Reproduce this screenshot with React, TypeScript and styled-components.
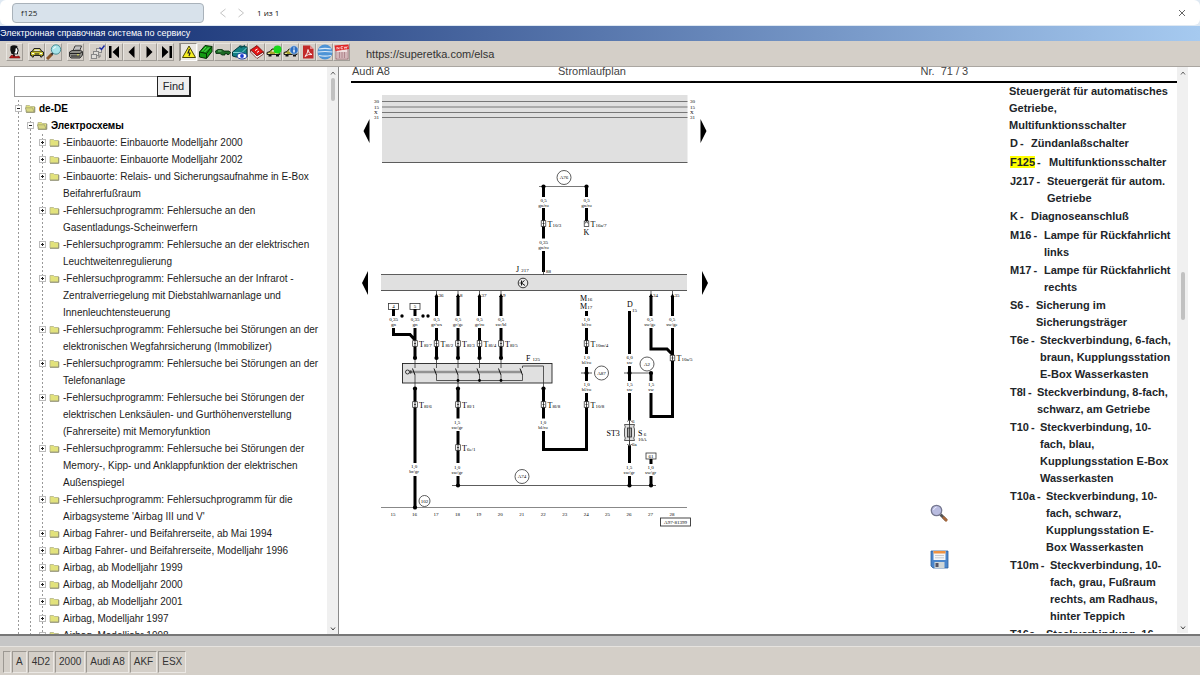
import React from 'react';
import styled, { createGlobalStyle } from 'styled-components';

const GlobalStyle = createGlobalStyle`
  *, *::before, *::after { box-sizing: border-box; }
  html, body { margin: 0; padding: 0; }
  body {
    font-family: "Liberation Sans", Arial, sans-serif;
    font-size: 11px;
    color: #212529;
    background: #d4cfc8;
  }
  ul, dl, dd, p { margin: 0; padding: 0; }
  ul { list-style: none; }
  button { padding: 0; font: inherit; color: inherit; cursor: pointer; }
  svg { display: block; }
`;

const Page = styled.div`
  display: flex;
  flex-direction: column;
  height: 100vh;
  overflow: hidden;
`;

/* ---------- browser find bar ---------- */

const FindBarFrame = styled.div`
  flex: none;
  background: #dfe9f3;
  padding-bottom: 1px;
`;

const FindBar = styled.form`
  display: flex;
  align-items: center;
  height: 25px;
  padding: 0 9px 0 12px;
  border-radius: 6px;
  background: #fff;
  font-family: "Open Sans", "Noto Sans", sans-serif;
  font-size: 8px;
`;

const FindBarInput = styled.input`
  width: 192px;
  height: 20px;
  margin-right: 10px;
  padding: 0 8px;
  border: 1px solid #a9b2ba;
  border-radius: 4px;
  background: #d8e2eb;
  color: #222;
  font: inherit;
  outline: none;
`;

const GhostButton = styled.button`
  display: grid;
  place-items: center;
  width: 18px;
  height: 18px;
  border: 0;
  background: none;
`;

const FindCount = styled.output`
  flex: 1;
  margin-left: 7px;
  color: #111;
`;

/* ---------- title and tool bars ---------- */

const TitleBar = styled.div`
  flex: none;
  height: 15px;
  line-height: 14px;
  font-size: 9px;
  color: #fff;
  background: linear-gradient(to right, #0a246a, #a6caf0);
`;

const Toolbar = styled.div`
  flex: none;
  display: flex;
  align-items: center;
  gap: 5px;
  height: 26px;
  padding: 0 6px 4px;
  background: #d4cfc8;
  border-bottom: 1px solid #aaa6a1;
`;

const ToolGroup = styled.div<{ $divided?: boolean }>`
  display: flex;
  border-left: ${p => (p.$divided ? '1px solid #99958f' : '0')};
`;

const ToolButton = styled.button<{ $pressed?: boolean }>`
  display: grid;
  place-items: center;
  width: 17px;
  height: 18px;
  border: 1px solid;
  border-color: ${p => (p.$pressed ? '#8e8a85 #fff #fff #8e8a85' : '#e8e5e0 #a19d97 #a19d97 #e8e5e0')};
  background: ${p => (p.$pressed ? '#ebe8e3' : '#d4cfc8')};
`;

const SiteAddress = styled.span`
  margin-left: 11px;
  padding-top: 5px;
  color: #333;
`;

/* ---------- main area ---------- */

const Main = styled.main`
  flex: 1;
  min-height: 0;
  display: flex;
  background: #fff;
  border-bottom: 2px solid #777;
`;

const Sidebar = styled.aside`
  flex: none;
  display: flex;
  width: 339px;
  border-right: 1px solid #8a8a8a;
`;

const SidebarContent = styled.div`
  flex: 1;
  min-width: 0;
  overflow: hidden;
  padding-top: 9px;
`;

const SearchForm = styled.form`
  display: flex;
  height: 21px;
  margin: 0 0 3px 14px;
`;

const SearchInput = styled.input`
  width: 143px;
  border: 1px solid #999;
  border-right: 0;
  padding: 0 4px;
  font: inherit;
  outline: none;
`;

const SearchButton = styled.button`
  width: 34px;
  border: 1px solid #222;
  border-width: 1px 2px 2px 1px;
  background: #efefef;
`;

const TreeList = styled.ul<{ $root?: boolean }>`
  padding-left: ${p => (p.$root ? '15px' : '12px')};
  background: repeating-linear-gradient(to bottom, #999 0 2px, transparent 2px 4px)
    ${p => (p.$root ? '18px' : '15px')} 0 / 1px 100% no-repeat;
`;

const TreeRow = styled.div<{ $bold?: boolean }>`
  display: grid;
  grid-template-columns: 7px 11px 1fr;
  column-gap: 3px;
  font-size: 10px;
  line-height: 17px;
  font-weight: ${p => (p.$bold ? 'bold' : 'normal')};
  color: ${p => (p.$bold ? '#000' : '#1c1c1c')};
`;

const TreeLabel = styled.span`
  white-space: pre;
`;

const Toggle = styled.button`
  width: 7px;
  height: 17px;
  border: 0;
  background: none;
`;

const FolderSlot = styled.span`
  display: flex;
  align-items: center;
  height: 17px;
`;

/* ---------- scrollbar ---------- */

const ScrollTrack = styled.div`
  flex: none;
  display: flex;
  flex-direction: column;
  align-items: center;
  width: 11px;
  background: #f0f0f0;
`;

const ScrollSpace = styled.div<{ $grow: number }>`
  flex: ${p => p.$grow} 1 0;
`;

const ScrollThumb = styled.div<{ $size: number }>`
  flex: none;
  width: 4px;
  height: ${p => p.$size}px;
  border-radius: 2px;
  background: #c1c1c1;
`;

const ScrollArrow = styled.div`
  display: grid;
  place-items: center;
  height: 11px;
`;

/* ---------- document ---------- */

const Document = styled.section`
  flex: 1;
  min-width: 0;
  display: flex;
  padding: 0 12px 1px 12px;
`;

const Sheet = styled.article`
  flex: 1;
  min-width: 0;
  display: flex;
  flex-direction: column;
  overflow: hidden;
`;

const SheetHeader = styled.header`
  flex: none;
  display: grid;
  grid-template-columns: 25fr 44fr 31fr;
  height: 16px;
  padding: 0 1px;
  line-height: 9px;
  border-bottom: 2px solid #000;
  color: #444;
`;

const SheetBody = styled.div`
  flex: 1;
  min-height: 0;
  display: flex;
`;

const DiagramPane = styled.div`
  flex: 1;
  min-width: 0;
  padding: 7px 9px;
`;

const SheetTools = styled.div`
  flex: none;
  display: flex;
  flex-direction: column;
  justify-content: flex-end;
  gap: 27px;
  width: 79px;
  padding-bottom: 64px;
`;

const SheetTool = styled.button`
  width: 19px;
  height: 19px;
  border: 0;
  background: none;
`;

const Legend = styled.div`
  flex: none;
  width: 168px;
  overflow: hidden;
  font-weight: bold;
  line-height: 17px;
  white-space: pre;
`;

const LegendTitle = styled.p`
  padding-bottom: 1px;
`;

const LegendItem = styled.dl<{ $indent: number; $wrapped: boolean }>`
  display: grid;
  grid-template-columns: ${p => p.$indent}px 1fr;
  padding: 0 0 ${p => (p.$wrapped ? 1 : 2)}px 1px;
`;

const LegendTerm = styled.dt`
  display: flex;
  gap: 2px;
`;

const Hit = styled.mark`
  background: #ff0;
  color: inherit;
  height: 12px;
  line-height: 12px;
  margin-top: 2px;
`;

/* ---------- status bar ---------- */

const StatusBand = styled.div`
  flex: none;
  height: 11px;
  background: #c6c6c6;
  border-bottom: 1px solid #e6e3df;
`;

const StatusBar = styled.footer`
  flex: none;
  display: flex;
  gap: 1px;
  height: 28px;
  padding: 4px 3px 2px;
  background: #d4cfc8;
`;

const StatusCell = styled.span`
  min-width: 7px;
  padding: 0 3px;
  border: 1px solid;
  border-color: #9c9892 #ebe8e4 #ebe8e4 #9c9892;
  font-size: 10px;
  line-height: 20px;
  color: #333;
`;

/* ---------- icons ---------- */

const Svg16: React.FC<{ children: React.ReactNode }> = ({ children }) => (
  <svg width="16" height="16" viewBox="0 0 16 16" aria-hidden="true">{children}</svg>
);

const CarShape = () => (
  <>
    <path d="M1.500 8 L3.500 7 L5 4.500 H11 L12.500 7 L14.500 8 V11.500 H13 V13 H11.500 V11.500 H4.500 V13 H3 V11.500 H1.500 Z" fill="#c8c032" stroke="#222" strokeWidth="1" />
    <path d="M5 7 L5.800 5.500 H10.200 L11 7 Z" fill="#e4e4d8" />
    <path d="M3 7.500 H13" stroke="#4a4720" strokeWidth="0.700" />
    <path d="M3 9.500 H5 M11 9.500 H13" stroke="#fff" />
    <path d="M6 10 H10" stroke="#222" />
  </>
);

const CarSideShape = () => (
  <>
    <path d="M1 8.500 L4 7.500 L6 5 H12 L13.500 7.500 L14 10.500 H1 Z" fill="#a9a22e" stroke="#222" />
    <path d="M5.500 7.500 L6.800 6 H8.500 V7.500 Z" fill="#fff" />
    <path d="M2 9.500 H4 M9 9.500 H12" stroke="#e8e49a" />
    <rect x="2.500" y="10.500" width="3" height="2" fill="#111" />
    <rect x="10" y="10.500" width="3" height="2" fill="#111" />
  </>
);

const icons: Record<string, React.ReactNode> = {
  user: (
    <>
      <path d="M5 2 H11 V9 L9 12 H6 L4 9 Z" fill="#fff" />
      <path d="M3.500 2.500 Q6 0.500 10.500 2 L10.500 4 L8.500 4.500 L8.500 7 L6.500 10.500 L4.500 10 Q2.500 6 3.500 2.500 Z" fill="#111" />
      <path d="M10.500 4 L11.200 7 L10.500 8 V10 H8" stroke="#111" fill="none" />
      <path d="M2.500 14 L4 11.500 L7 11 L9 12.500 L12 12 L13 14 Z" fill="#c01818" stroke="#500" strokeWidth="0.500" />
      <path d="M7 9 V12.500" stroke="#111" strokeWidth="1.500" />
    </>
  ),
  car: <CarShape />,
  search: (
    <>
      <path d="M6 10 L1 15" stroke="#8a5527" strokeWidth="3" />
      <path d="M7.500 8.500 L5.500 10.500" stroke="#333" strokeWidth="2" />
      <circle cx="10" cy="5.500" r="4.700" fill="#a8e4ea" stroke="#4a8f96" />
      <path d="M7.500 5 Q8 3 10 2.800" stroke="#fff" fill="none" />
    </>
  ),
  print: (
    <>
      <path d="M5 7 L7 2 H13.500 L11.500 7 Z" fill="#fff" stroke="#333" />
      <path d="M7 4 H12 M6.500 5.700 H11.500" stroke="#555" strokeWidth="0.700" />
      <path d="M1.500 8 L4 6.500 H12.500 L14.500 7.500 V11 L12 14 H3 L1.500 12.500 Z" fill="#8d8d88" stroke="#333" />
      <path d="M2 9.500 H12 L14 7.800 M3 12 H12" stroke="#222" fill="none" />
      <path d="M9 10.800 H11" stroke="#e6e64a" />
    </>
  ),
  steps: (
    <>
      <rect x="6.500" y="4.500" width="5" height="4" fill="#e0deda" stroke="#888" />
      <rect x="3.500" y="7.500" width="5" height="4" fill="#e0deda" stroke="#888" />
      <rect x="1.500" y="10.500" width="5" height="4" fill="#e0deda" stroke="#888" />
      <path d="M8 13 H10 V10.500" fill="none" stroke="#777" />
      <path d="M9.500 3.500 L11.500 5.500 L14.500 1.500" fill="none" stroke="#1b2ca8" strokeWidth="1.400" />
    </>
  ),
  first: <path d="M2 2 H4.500 V14 H2 Z M12 2 V14 L5.500 8 Z" fill="#000" />,
  prev: <path d="M10.500 2 V14 L4.500 8 Z" fill="#000" />,
  next: <path d="M5.500 2 V14 L11.500 8 Z" fill="#000" />,
  last: <path d="M11.500 2 H14 V14 H11.500 Z M4 2 V14 L10.500 8 Z" fill="#000" />,
  voltage: (
    <>
      <path d="M8 2 L14.500 13.500 H1.500 Z" fill="#f6ee22" stroke="#4a4600" />
      <path d="M8.500 5 L7 9 H9 L8 12" fill="none" stroke="#222" strokeWidth="1.200" />
    </>
  ),
  box: (
    <>
      <path d="M1.500 8 L7 1.500 L14 2.500 V7.500 L8.500 14.500 L1.500 13 Z" fill="#149a14" stroke="#042c04" />
      <path d="M1.500 8 L8.500 9.500 L14 2.500 M8.500 9.500 V14" fill="none" stroke="#042c04" />
      <path d="M4 7.500 L8 3 M6.500 8 L11 3.500" stroke="#5fe05f" />
    </>
  ),
  connector: (
    <>
      <path d="M0.500 7 L3 5.500 H7 L9 7 L14 7 L15.500 8.500 L14 10.500 H12 V9.500 H10 V11 H7 L5 9.500 H1 Z" fill="#1d6a26" stroke="#04270a" strokeWidth="0.800" />
      <path d="M3 7 H6.500" stroke="#7fc784" />
    </>
  ),
  manual: (
    <>
      <path d="M0.500 8 L8 2 L15 3 V13 H4 L0.500 12 Z" fill="#128083" stroke="#04383a" />
      <path d="M1 8.500 L10 8.500 L15 3.500" stroke="#7fd0d2" fill="none" />
      <path d="M8 1.500 L9 4 L13 1" stroke="#0a5557" fill="none" />
      <ellipse cx="10" cy="12" rx="5" ry="3" fill="#fff" stroke="#1c3aa0" />
      <circle cx="10" cy="12" r="1.900" fill="#1c3ad0" />
    </>
  ),
  book: (
    <>
      <path d="M1.500 6 L8 1.500 L14.500 8 L8 12 Z" fill="#e31616" stroke="#5a0000" strokeWidth="0.700" />
      <path d="M1.500 6 V8 L8 14.500 L14.500 10 V8 L8 12 Z" fill="#fff" stroke="#5a0000" strokeWidth="0.700" />
      <path d="M6 6.500 L8.500 5 M8 8.500 L10 7" stroke="#fff" />
    </>
  ),
  carOk: (
    <>
      <CarSideShape />
      <circle cx="11.500" cy="5.500" r="4" fill="#18d61c" />
    </>
  ),
  carInfo: (
    <>
      <CarSideShape />
      <circle cx="11" cy="6" r="4.200" fill="#2e6fc2" stroke="#cfe0f4" strokeWidth="0.700" />
      <path d="M11 3.400 V4.600 M11 5.500 V8.600" stroke="#fff" strokeWidth="1.500" />
    </>
  ),
  pdf: (
    <>
      <path d="M3 1.500 H10 L13.500 5 V14.500 H3 Z" fill="#c22a2a" />
      <path d="M10 1.500 V5 H13.500" fill="#e58a8a" />
      <path d="M5 12.500 Q8 9 8 5.500 Q8.500 10 12 10.500 Q8 9.800 5 12.500" fill="none" stroke="#fff" strokeWidth="0.900" />
    </>
  ),
  globe: (
    <>
      <circle cx="8" cy="8" r="7.500" fill="#4d94d6" />
      <path d="M2 5 Q8 3.600 14 5 M0.500 8 Q8 7 15.500 8 M2 11.500 Q8 12.700 14 11.500" stroke="#dcebf8" fill="none" strokeWidth="1.200" />
    </>
  ),
  calendar: (
    <>
      <rect x="2" y="4" width="12" height="11" fill="#efe0e0" stroke="#8e5560" strokeWidth="0.800" />
      <path d="M3 9 H13 M3 11 H13 M3 13 H13 M5.500 8 V14 M8 8 V14 M10.500 8 V14" stroke="#a87a82" strokeWidth="0.800" />
      <path d="M0.500 1.500 L14.500 0.500 L15 5 L1.500 7 Z" fill="#e02626" />
      <path d="M3 5.500 V3.200 L5 5.200 V3 M9 4.800 H7 V2.700 H9 M10 2.500 L10.800 4.500 L11.600 2.800 L12.400 4.300 L13.200 2.200" stroke="#fff" strokeWidth="0.700" fill="none" />
    </>
  ),
};

const Folder: React.FC<{ open?: boolean }> = ({ open }) => (
  <svg width="11" height="9" viewBox="0 0 11 9" aria-hidden="true">
    <path d="M1 8 V1.500 H4.500 L5.500 2.500 H9.500 V8 Z" fill="#e2e27c" stroke="#b4b48a" strokeWidth="0.800" />
    <path d="M1 8.300 H9.800 V3" fill="none" stroke="#808062" strokeWidth="0.800" />
    {open && <path d="M0.300 3.800 H7.500 L9 8 H2 Z" fill="#d8d884" stroke="#9a9a70" strokeWidth="0.700" />}
  </svg>
);

const PlusMinus: React.FC<{ open?: boolean }> = ({ open }) => (
  <svg width="7" height="7" viewBox="0 0 7 7" aria-hidden="true">
    <rect x="0.500" y="0.500" width="6" height="6" fill="#fff" stroke="#bbb" />
    <path d={open ? 'M2 3.500 H5' : 'M2 3.500 H5 M3.500 2 V5'} stroke="#222" />
  </svg>
);

const Chevron: React.FC<{ d: string; color: string; w?: number; h?: number; stroke?: number }> = ({ d, color, w = 8, h = 10, stroke = 1 }) => (
  <svg width={w} height={h} viewBox={`0 0 ${w} ${h}`} aria-hidden="true">
    <path d={d} fill="none" stroke={color} strokeWidth={stroke} />
  </svg>
);

const Scrollbar: React.FC<{ before: number; size: number; after: number }> = ({ before, size, after }) => (
  <ScrollTrack aria-hidden="true">
    <ScrollArrow><Chevron w={6} h={4} d="M1 3.500 L3 1 L5 3.500" color="#666" stroke={1} /></ScrollArrow>
    <ScrollSpace $grow={before} />
    <ScrollThumb $size={size} />
    <ScrollSpace $grow={after} />
    <ScrollArrow><Chevron w={6} h={4} d="M1 0.500 L3 3 L5 0.500" color="#444" stroke={1} /></ScrollArrow>
  </ScrollTrack>
);

/* ---------- wiring diagram ---------- */

const DiagramSvg = styled.svg`
  font-family: "Liberation Serif", "Times New Roman", serif;
  font-size: 5px;
  fill: #000;
`;

const Wire: React.FC<{ d: string }> = ({ d }) => <path d={d} fill="none" stroke="#000" strokeWidth="3" />;
const Line: React.FC<{ d: string; c?: string }> = ({ d, c = '#333' }) => <path d={d} fill="none" stroke={c} strokeWidth="0.800" />;
const Dot: React.FC<{ x: number; y: number }> = ({ x, y }) => <circle cx={x} cy={y} r="2.100" fill="#000" />;

const Gauge: React.FC<{ x: number; y: number; size: string; color: string }> = ({ x, y, size, color }) => (
  <g textAnchor="middle">
    <text x={x} y={y + 2}>{size}</text>
    <text x={x} y={y + 7}>{color}</text>
  </g>
);

const Plug: React.FC<{ x: number; y: number; name: string; pin: string }> = ({ x, y, name, pin }) => (
  <g>
    <rect x={x - 2.3} y={y - 2.8} width="4.600" height="5.600" fill="#fff" stroke="#222" strokeWidth="0.700" />
    <path d={`M${x} ${y - 2.5} V${y + 2.5} M${x - 1} ${y} H${x + 1}`} stroke="#222" strokeWidth="0.800" />
    <text x={x + 4} y={y + 3} fontSize="8">{name}<tspan fontSize="5">{pin}</tspan></text>
  </g>
);

const Ring: React.FC<{ x: number; y: number; r?: number; label: string }> = ({ x, y, r = 7, label }) => (
  <g>
    <circle cx={x} cy={y} r={r} fill="#fff" stroke="#333" strokeWidth="0.800" />
    <text x={x} y={y + 1.7} textAnchor="middle">{label}</text>
  </g>
);

const BoxTag: React.FC<{ x: number; y: number; label: string; w?: number }> = ({ x, y, label, w = 10 }) => (
  <g>
    <rect x={x - w / 2} y={y - 3} width={w} height="6" fill="#fff" stroke="#333" strokeWidth="0.800" />
    <text x={x} y={y + 1.8} textAnchor="middle">{label}</text>
  </g>
);

const Terminal: React.FC<{ x: number; label: string }> = ({ x, label }) => (
  <g>
    <Line d={`M${x} 291 V297`} />
    <path d={`M${x - 2} 297 L${x} 293.500 L${x + 2} 297 Z`} />
    <text x={x + 2} y="297">{label}</text>
    <Wire d={`M${x} 296 V316`} />
  </g>
);

const controlPins = [
  { x: 436.5, pin: '36', color: 'gr/ws', plug: '8l/2' },
  { x: 458, pin: '8', color: 'gr/ge', plug: '8l/3' },
  { x: 479.5, pin: '37', color: 'gr/ro', plug: '8l/4' },
  { x: 501, pin: '9', color: 'sw/bl', plug: '8l/5' },
];

const railLabels = [
  { y: 101.5, label: '30' },
  { y: 107, label: '15' },
  { y: 112.5, label: 'X' },
  { y: 117.5, label: '31' },
];

const switchXs = [415, 436.5, 458, 479.5, 501, 522.5];

const Diagram = () => (
  <DiagramSvg width="352" height="440" viewBox="360 90 352 440" role="img" aria-label="Stromlaufplan">
    <rect x="382" y="95" width="305.500" height="67" fill="#e0e0e0" />
    {railLabels.map(r => (
      <g key={r.label}>
        <path d={`M382 ${r.y} H687.500`} stroke="#777" strokeWidth="1" />
        <text x="374" y={r.y + 1.5}>{r.label}</text>
        <text x="690" y={r.y + 1.5}>{r.label}</text>
      </g>
    ))}
    <Line d="M382 162.500 H687.500" />
    <path d="M363.500 131 L369.500 119 V143 Z M706.500 131 L700.500 119 V143 Z M362 283 L368 271 V295 Z M708 283 L702 271 V295 Z" fill="#000" />

    {/* diagnosis line A76 */}
    <Ring x={564} y={177.5} label="A76" />
    <Line d="M539 186.500 H587" c="#555" />
    <Wire d="M543.500 186 V197 M586.500 186 V197 M543.500 208 V238.500 M586.500 208 V222 M543.500 251 V272" />
    <Dot x={543.5} y={186.5} />
    <Dot x={586.5} y={186.5} />
    <Gauge x={543.5} y={199.5} size="0,5" color="gn/ro" />
    <Gauge x={586.5} y={199.5} size="0,5" color="gn/ro" />
    <Gauge x={543.5} y={242} size="0,35" color="gn/ro" />
    <Plug x={543.5} y={223.5} name="T" pin="10/3" />
    <rect x="584.200" y="221" width="4.600" height="5.500" fill="#fff" stroke="#222" strokeWidth="0.700" />
    <path d="M585 223.500 L586.500 221.500 L588 223.500" fill="none" stroke="#222" strokeWidth="0.800" />
    <text x="590.500" y="226.500" fontSize="8">T<tspan fontSize="5">16a/7</tspan></text>
    <text x="586.500" y="235" fontSize="8" textAnchor="middle">K</text>
    <text x="516" y="272" fontSize="8">J <tspan fontSize="5">217</tspan></text>
    <text x="546" y="273">88</text>

    {/* control unit J217 */}
    <rect x="381" y="275" width="306" height="16" fill="#e0e0e0" />
    <Line d="M381 274.500 H687 M381 290.500 H687 M543.500 270 V275" />
    <circle cx="523" cy="283" r="4.800" fill="#e8e8e8" stroke="#222" strokeWidth="0.900" />
    <path d="M521.500 280.500 V285.500 M524.500 280.500 L521.500 283 L525 285.500" fill="none" stroke="#111" />
    <path d="M519.500 283 H522" stroke="#111" strokeWidth="0.700" />

    <BoxTag x={393.5} y={306.5} label="4" />
    <BoxTag x={415} y={306.5} label="5" />
    <Wire d="M393.500 309 V316 M415 309 V316 M393.500 328 V334.500 H410 L415 340 M415 328 V358" />
    <Gauge x={393.5} y={319} size="0,35" color="gn" />
    <Gauge x={415} y={319} size="0,35" color="gn" />
    <circle cx="402" cy="316" r="1.700" />
    <circle cx="423" cy="316" r="1.700" />
    <circle cx="428" cy="316" r="1.700" />
    <Plug x={415} y={343.5} name="T" pin="8l/7" />
    {controlPins.map(p => (
      <g key={p.pin}>
        <Terminal x={p.x} label={p.pin} />
        <Gauge x={p.x} y={319} size="0,5" color={p.color} />
        <Wire d={`M${p.x} 328 V358`} />
        <Plug x={p.x} y={343.5} name="T" pin={p.plug} />
      </g>
    ))}

    {/* multifunction switch F125 */}
    <rect x="402.500" y="363.500" width="149.500" height="19.500" fill="#e0e0e0" stroke="#222" strokeWidth="0.900" />
    <text x="526" y="360.500" fontSize="8">F <tspan fontSize="5">125</tspan></text>
    <circle cx="407.500" cy="372" r="2" fill="none" stroke="#111" strokeWidth="0.800" />
    <circle cx="410.500" cy="372" r="1.400" />
    <Line d="M409 371.300 H522" c="#666" />
    <Line d="M409 372.700 H522" c="#666" />
    {switchXs.map(x => (
      <g key={x}>
        <Line d={`M${x} ${x === 522.5 ? 366 : 358} V368 M${x} 375 V${x === 415 ? 388 : 380.5}`} />
        <path d={`M${x - 2.5} 368.500 L${x} 375`} stroke="#000" strokeWidth="0.900" />
        {x < 522 && <Dot x={x} y={358} />}
      </g>
    ))}
    <Line d="M436.500 380.500 H522.500 M458 380.500 V388 M522.500 366 H543.500 V388" />
    {[458, 479.5, 501].map(x => <circle key={x} cx={x} cy="380.500" r="1.400" />)}
    {[415, 458, 543.5].map(x => <Dot key={x} x={x} y={388.5} />)}

    <Wire d="M415 388 V463 M415 476 V508 M458 388 V418.500 M458 431 V463 M458 476 V485.500" />
    <Plug x={415} y={404.5} name="T" pin="8l/6" />
    <Plug x={458} y={404.5} name="T" pin="8l/1" />
    <Plug x={458} y={447.5} name="T" pin="6e/1" />
    <Gauge x={414} y={466} size="1,0" color="br/gr" />
    <Gauge x={457} y={421.5} size="1,5" color="sw/gr" />
    <Gauge x={457} y={467} size="1,0" color="sw/gr" />
    <Ring x={424.5} y={501} r={5.5} label="102" />
    <Ring x={522} y={476.5} label="A74" />

    {/* reversing lamps M16 / M17 */}
    <text x="580" y="301" fontSize="8">M<tspan fontSize="5">16</tspan></text>
    <text x="580" y="309" fontSize="8">M<tspan fontSize="5">17</tspan></text>
    <Wire d="M586.500 311 V316 M586.500 328 V354 M586.500 367 V381 M586.500 393 V449.500 H543.500 V431 M543.500 388 V418.500" />
    <Line d="M581 373 H592" />
    <Dot x={586.5} y={373} />
    <Gauge x={586.5} y={319} size="1,0" color="bl/ro" />
    <Gauge x={586.5} y={357} size="1,0" color="bl/ro" />
    <Gauge x={586.5} y={384} size="1,0" color="bl/ro" />
    <Gauge x={543} y={421.5} size="1,0" color="bl/ro" />
    <Plug x={586.5} y={343.5} name="T" pin="10m/4" />
    <Plug x={586.5} y={404.5} name="T" pin="10/8" />
    <Plug x={543.5} y={404.5} name="T" pin="8l/8" />
    <Ring x={601.5} y={373} label="A87" />

    {/* ignition switch D and fuse S6 */}
    <text x="630" y="307" fontSize="8" textAnchor="middle">D</text>
    <text x="632" y="312">15</text>
    <Wire d="M629.500 311 V354 M629.500 366 V381 M629.500 393 V420 M629.500 446 V463 M629.500 476 V485.500 M651 373 V381 M651 393 V416.500 H672.500 V328" />
    <Line d="M624 373 H651 M629.500 420 V446" />
    <Dot x={629.5} y={373} />
    <Dot x={651} y={373} />
    <Gauge x={629.5} y={357} size="6,0" color="sw" />
    <Gauge x={629.5} y={384} size="1,5" color="sw" />
    <Gauge x={651} y={384} size="1,5" color="sw" />
    <Ring x={647} y={364} label="A2" />
    <path d="M624.500 424.500 H634.500 Q633 427 634.500 429 V436 Q633 438 634.500 440.500 H624.500 Q626 438 624.500 436 V429 Q626 427 624.500 424.500 Z" fill="#ddd" stroke="#333" strokeWidth="0.800" />
    <rect x="627.500" y="428" width="4" height="9" fill="#aaa" stroke="#222" strokeWidth="0.800" />
    <Line d="M629.500 420 V446" />
    <path d="M627.500 421.500 L629.500 419 L631.500 421.500 M627.500 444 L629.500 447 L631.500 444" fill="none" stroke="#111" strokeWidth="0.800" />
    <text x="632" y="423">6</text>
    <text x="632" y="446">6a</text>
    <text x="606.500" y="436" fontSize="8">ST3</text>
    <text x="638" y="436" fontSize="8">S<tspan fontSize="5"> 6</tspan></text>
    <text x="638" y="441">10A</text>
    <Gauge x={629} y={467} size="1,5" color="sw/gr" />

    <Terminal x={651} label="34" />
    <Terminal x={672.5} label="35" />
    <Gauge x={650} y={319} size="0,5" color="sw/ge" />
    <Gauge x={672} y={319} size="0,5" color="sw/ge" />
    <Wire d="M651 328 V349 H667 L672 354" />
    <Plug x={672.5} y={358} name="T" pin="10a/5" />

    <BoxTag x={651} y={456} label="61" />
    <Wire d="M651 459 V464 M651 476 V485.500" />
    <Gauge x={650.5} y={467} size="1,0" color="sw/gr" />
    <Line d="M452 485.500 H656" />
    {[458, 629.5, 651].map(x => <Dot key={x} x={x} y={485.5} />)}

    <path d="M381 507.500 H687" stroke="#888" />
    <Dot x={415} y={507.5} />
    {Array.from({ length: 14 }, (_, i) => (
      <text key={i} x={393 + i * 21.46} y="516" textAnchor="middle">{15 + i}</text>
    ))}
    <rect x="660.500" y="518" width="30" height="8" fill="#fff" stroke="#333" strokeWidth="0.900" />
    <text x="675.500" y="524" textAnchor="middle">A97-81399</text>
  </DiagramSvg>
);

/* ---------- data ---------- */

const toolGroups: { names: [string, string][]; divided?: boolean }[] = [
  { names: [['user', 'Benutzer']] },
  { names: [['car', 'Fahrzeug'], ['search', 'Suche']] },
  { names: [['print', 'Drucken']] },
  { names: [['steps', 'Auswahl'], ['first', 'Erste Seite'], ['prev', 'Zurück'], ['next', 'Weiter'], ['last', 'Letzte Seite']] },
  {
    divided: true,
    names: [
      ['voltage', 'Stromlaufpläne'], ['box', 'Teile'], ['connector', 'Stecker'], ['manual', 'Reparatur'], ['book', 'Handbuch'],
      ['carOk', 'Wartung'], ['carInfo', 'Fahrzeuginfo'], ['pdf', 'PDF'], ['globe', 'Internet'], ['calendar', 'Neu'],
    ],
  },
];

const treeItems = [
  '-Einbauorte: Einbauorte Modelljahr 2000',
  '-Einbauorte: Einbauorte Modelljahr 2002',
  '-Einbauorte: Relais- und Sicherungsaufnahme in E-Box\nBeifahrerfußraum',
  '-Fehlersuchprogramm: Fehlersuche an den\nGasentladungs-Scheinwerfern',
  '-Fehlersuchprogramm: Fehlersuche an der elektrischen\nLeuchtweitenregulierung',
  '-Fehlersuchprogramm: Fehlersuche an der Infrarot -\nZentralverriegelung mit Diebstahlwarnanlage und\nInnenleuchtensteuerung',
  '-Fehlersuchprogramm: Fehlersuche bei Störungen an der\nelektronischen Wegfahrsicherung (Immobilizer)',
  '-Fehlersuchprogramm: Fehlersuche bei Störungen an der\nTelefonanlage',
  '-Fehlersuchprogramm: Fehlersuche bei Störungen der\nelektrischen Lenksäulen- und Gurthöhenverstellung\n(Fahrerseite) mit Memoryfunktion',
  '-Fehlersuchprogramm: Fehlersuche bei Störungen der\nMemory-, Kipp- und Anklappfunktion der elektrischen\nAußenspiegel',
  "-Fehlersuchprogramm: Fehlersuchprogramm für die\nAirbagsysteme 'Airbag III und V'",
  'Airbag Fahrer- und Beifahrerseite, ab Mai 1994',
  'Airbag Fahrer- und Beifahrerseite, Modelljahr 1996',
  'Airbag, ab Modelljahr 1999',
  'Airbag, ab Modelljahr 2000',
  'Airbag, ab Modelljahr 2001',
  'Airbag, Modelljahr 1997',
  'Airbag, Modelljahr 1998',
];

const legend: { term: string; text: string; indent: number; hit?: boolean }[] = [
  { term: 'D', text: 'Zündanlaßschalter', indent: 21 },
  { term: 'F125', text: 'Multifunktionsschalter', indent: 39, hit: true },
  { term: 'J217', text: 'Steuergerät für autom.\nGetriebe', indent: 37 },
  { term: 'K', text: 'Diagnoseanschluß', indent: 21 },
  { term: 'M16', text: 'Lampe für Rückfahrlicht\nlinks', indent: 34 },
  { term: 'M17', text: 'Lampe für Rückfahrlicht\nrechts', indent: 34 },
  { term: 'S6', text: 'Sicherung im\nSicherungsträger', indent: 26 },
  { term: 'T6e', text: 'Steckverbindung, 6-fach,\nbraun, Kupplungsstation\nE-Box Wasserkasten', indent: 30 },
  { term: 'T8l', text: 'Steckverbindung, 8-fach,\nschwarz, am Getriebe', indent: 27 },
  { term: 'T10', text: 'Steckverbindung, 10-\nfach, blau,\nKupplungsstation E-Box\nWasserkasten', indent: 30 },
  { term: 'T10a', text: 'Steckverbindung, 10-\nfach, schwarz,\nKupplungsstation E-\nBox Wasserkasten', indent: 36 },
  { term: 'T10m', text: 'Steckverbindung, 10-\nfach, grau, Fußraum\nrechts, am Radhaus,\nhinter Teppich', indent: 40 },
  { term: 'T16a', text: 'Steckverbindung, 16-', indent: 36 },
];

const statusValues = ['', 'A', '4D2', '2000', 'Audi A8', 'AKF', 'ESX'];

const TreeEntry: React.FC<{ label: string; open?: boolean; children?: React.ReactNode }> = ({ label, open, children }) => (
  <li>
    <TreeRow $bold={open}>
      <Toggle type="button" aria-label={label} aria-expanded={!!open}><PlusMinus open={open} /></Toggle>
      <FolderSlot><Folder open={open} /></FolderSlot>
      <TreeLabel>{label}</TreeLabel>
    </TreeRow>
    {children}
  </li>
);

const hold = (e: React.FormEvent) => e.preventDefault();

export default function App() {
  return (
    <Page>
      <GlobalStyle />
      <FindBarFrame>
        <FindBar onSubmit={hold}>
          <FindBarInput aria-label="Найти на странице" defaultValue="f125" />
          <GhostButton type="button" aria-label="Назад"><Chevron d="M6.500 1 L1.500 5 L6.500 9" color="#c4c4c4" /></GhostButton>
          <GhostButton type="button" aria-label="Вперёд"><Chevron d="M1.500 1 L6.500 5 L1.500 9" color="#c4c4c4" /></GhostButton>
          <FindCount>1 из 1</FindCount>
          <GhostButton type="button" aria-label="Закрыть"><Chevron w={8} h={8} d="M1 1 L7 7 M7 1 L1 7" color="#666" /></GhostButton>
        </FindBar>
      </FindBarFrame>
      <TitleBar>Электронная справочная система по сервису</TitleBar>
      <Toolbar role="toolbar">
        {toolGroups.map((group, i) => (
          <ToolGroup key={i} $divided={group.divided}>
            {group.names.map(([name, label]) => (
              <ToolButton key={name} type="button" aria-label={label} $pressed={name === 'voltage'}>
                <Svg16>{icons[name]}</Svg16>
              </ToolButton>
            ))}
          </ToolGroup>
        ))}
        <SiteAddress>https://superetka.com/elsa</SiteAddress>
      </Toolbar>
      <Main>
        <Sidebar>
          <SidebarContent>
            <SearchForm onSubmit={hold}>
              <SearchInput aria-label="Find" />
              <SearchButton type="submit">Find</SearchButton>
            </SearchForm>
            <TreeList $root>
              <TreeEntry label="de-DE" open>
                <TreeList>
                  <TreeEntry label="Электросхемы" open>
                    <TreeList>
                      {treeItems.map(item => <TreeEntry key={item} label={item} />)}
                    </TreeList>
                  </TreeEntry>
                </TreeList>
              </TreeEntry>
            </TreeList>
          </SidebarContent>
          <Scrollbar before={0} size={23} after={1} />
        </Sidebar>
        <Document>
          <Sheet>
            <SheetHeader>
              <span>Audi A8</span>
              <span>Stromlaufplan</span>
              <span>Nr.&nbsp; 71 / 3</span>
            </SheetHeader>
            <SheetBody>
              <DiagramPane><Diagram /></DiagramPane>
              <SheetTools>
                <SheetTool type="button" aria-label="Vergrößern">
                  <svg width="19" height="19" viewBox="0 0 19 19">
                    <path d="M10.500 10.500 L16.500 16.500" stroke="#555" strokeWidth="3" />
                    <path d="M13 13 L17 17" stroke="#a8683c" strokeWidth="2.500" />
                    <circle cx="6.500" cy="6.500" r="5.200" fill="#b9bce0" stroke="#75778f" strokeWidth="1.300" />
                    <path d="M3.500 6 Q4 3.500 6.500 3.200" stroke="#eef" fill="none" />
                  </svg>
                </SheetTool>
                <SheetTool type="button" aria-label="Speichern">
                  <svg width="19" height="19" viewBox="0 0 19 19">
                    <path d="M1 1 H18 V18 H3 L1 16 Z" fill="#4a86cc" stroke="#2f5f9c" strokeWidth="0.800" />
                    <rect x="3.500" y="1" width="12" height="9" fill="#f4f6f8" />
                    <rect x="3.500" y="1" width="12" height="2.500" fill="#ef9240" />
                    <path d="M5 5.500 H14 M5 7.800 H14" stroke="#c5cad0" />
                    <rect x="4.500" y="12" width="10" height="6" fill="#cfd6d6" />
                    <rect x="5.500" y="13" width="3" height="4" fill="#556" />
                  </svg>
                </SheetTool>
              </SheetTools>
              <Legend>
                <LegendTitle>{'Steuergerät für automatisches\nGetriebe,\nMultifunktionsschalter'}</LegendTitle>
                {legend.map(item => (
                  <LegendItem key={item.term} $indent={item.indent} $wrapped={item.text.includes('\n')}>
                    <LegendTerm>
                      {item.hit ? <Hit>{item.term}</Hit> : <span>{item.term}</span>}
                      <span>-</span>
                    </LegendTerm>
                    <dd>{item.text}</dd>
                  </LegendItem>
                ))}
              </Legend>
            </SheetBody>
          </Sheet>
          <Scrollbar before={194} size={48} after={302} />
        </Document>
      </Main>
      <StatusBand />
      <StatusBar>
        {statusValues.map((value, i) => <StatusCell key={i}>{value}</StatusCell>)}
      </StatusBar>
    </Page>
  );
}
